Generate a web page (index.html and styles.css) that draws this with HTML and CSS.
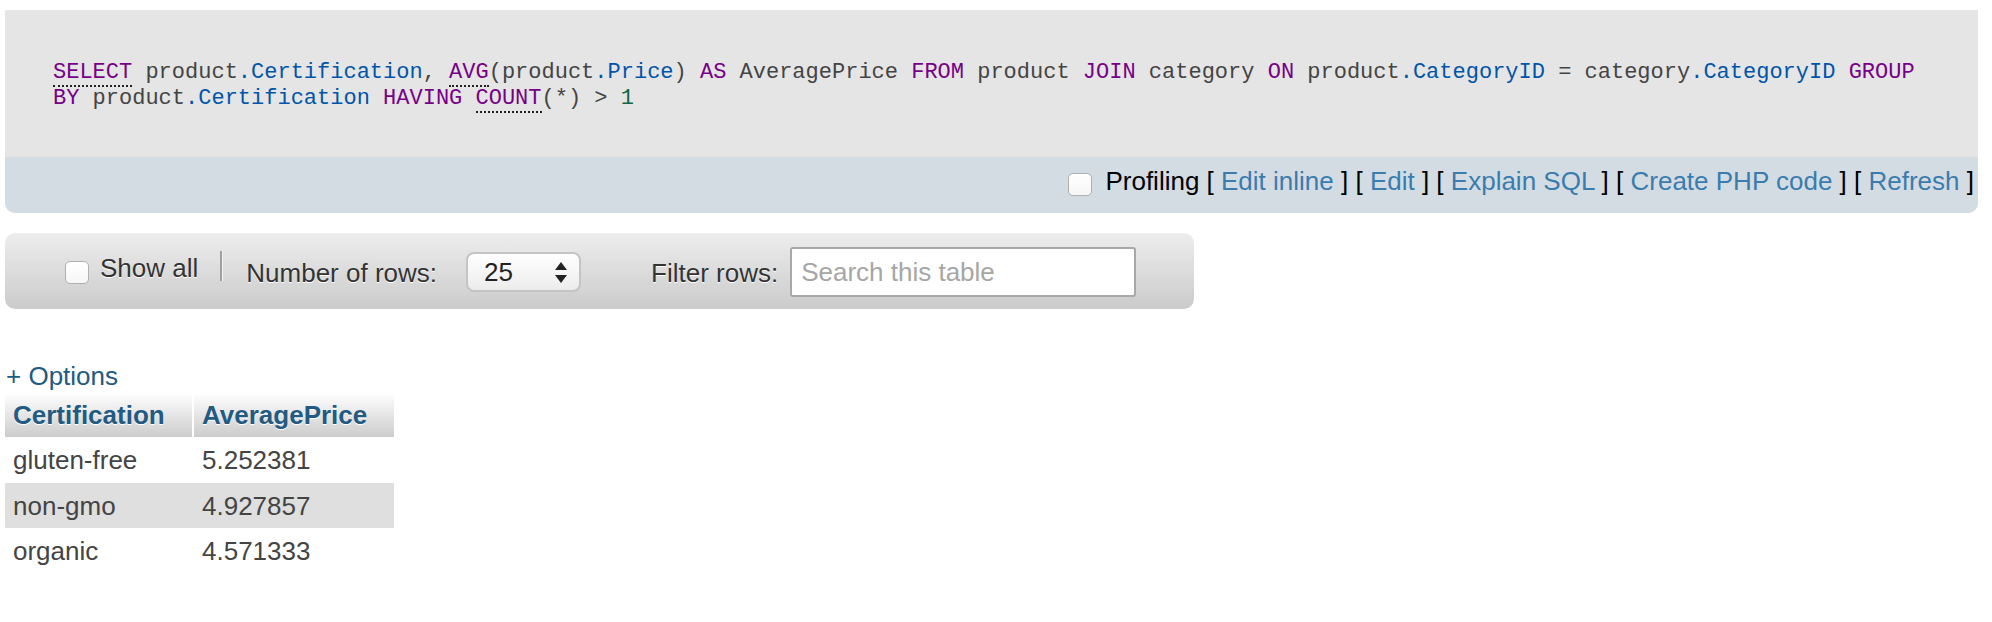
FILE: index.html
```html
<!DOCTYPE html>
<html lang="en">
<head>
<meta charset="utf-8">
<title>SQL result</title>
<link rel="stylesheet" href="styles.css">
</head>
<body>
<div class="page">
  <div class="sqlbox">
    <div class="sqlcode"><span class="kw dot">SELECT</span> product<span class="var">.Certification</span>, <span class="kw dot">AVG</span>(product<span class="var">.Price</span>) <span class="kw">AS</span> AveragePrice <span class="kw">FROM</span> product <span class="kw">JOIN</span> category <span class="kw">ON</span> product<span class="var">.CategoryID</span> = category<span class="var">.CategoryID</span> <span class="kw">GROUP</span> <span class="kw">BY</span> product<span class="var">.Certification</span> <span class="kw">HAVING</span> <span class="kw dot">COUNT</span>(*) &gt; <span class="num">1</span></div>
    <div class="sqlbar">
      <input type="checkbox" class="cb cb-bar">
      <span class="bartext">Profiling [ <a class="barlink">Edit inline</a> ] [ <a class="barlink">Edit</a> ] [ <a class="barlink">Explain SQL</a> ] [ <a class="barlink">Create PHP code</a> ] [ <a class="barlink">Refresh</a> ]</span>
    </div>
  </div>

  <div class="navbar">
    <input type="checkbox" class="cb cb-nav">
    <span class="lbl lbl-show">Show all</span>
    <span class="sep"></span>
    <span class="lbl lbl-rows">Number of rows:</span>
    <span class="select">
      <span class="select-val">25</span>
      <svg class="arrows" width="12" height="22" viewBox="0 0 12 22"><path d="M6 0 L12 8 L0 8 Z" fill="#222"/><path d="M0 13 L12 13 L6 21 Z" fill="#222"/></svg>
    </span>
    <span class="lbl lbl-filter">Filter rows:</span>
    <input type="text" class="filter" placeholder="Search this table">
  </div>

  <a class="options">+ Options</a>

  <table class="results">
    <colgroup><col class="c1"><col class="c2"></colgroup>
    <thead>
      <tr><th class="th1">Certification</th><th>AveragePrice</th></tr>
    </thead>
    <tbody>
      <tr class="odd"><td>gluten-free</td><td>5.252381</td></tr>
      <tr class="even"><td>non-gmo</td><td>4.927857</td></tr>
      <tr class="odd"><td>organic</td><td>4.571333</td></tr>
    </tbody>
  </table>
</div>
</body>
</html>
```

FILE: styles.css
```css
html, body {
  margin: 0;
  padding: 0;
  background: #fff;
}

body {
  font-family: "Liberation Sans", Arial, sans-serif;
  color: #444;
}

.page {
  padding: 10px 14px 20px 5px;
}

/* SQL box */
.sqlbox {
  background: #e5e5e5;
  border-radius: 0 0 10px 10px;
  overflow: hidden;
}

.sqlcode {
  padding: 50px 48px 45px 48px;
  font-family: "Liberation Mono", "Courier New", monospace;
  font-size: 22px;
  line-height: 26px;
  color: #444;
}

.kw { color: #770088; }
.var { color: #0055aa; }
.num { color: #116644; }
.dot { border-bottom: 2px dotted #222; }

.sqlbar {
  background: #d3dce3;
  height: 56px;
  box-sizing: border-box;
  padding: 9px 4px 0 8px;
  display: flex;
  justify-content: flex-end;
  align-items: flex-start;
  font-size: 26px;
  line-height: 30px;
  color: #000;
}

.cb {
  -webkit-appearance: none;
  appearance: none;
  margin: 0;
  width: 24px;
  height: 23px;
  box-sizing: border-box;
  border: 1px solid #b0b0b0;
  border-radius: 5px;
  background: linear-gradient(#fff, #f6f6f6);
  flex: none;
}

.cb-bar {
  margin-top: 7px;
  margin-right: 13px;
}

.barlink {
  color: #3a7cae;
  text-decoration: none;
}

/* navigation toolbar */
.navbar {
  margin-top: 20px;
  width: 1189px;
  height: 76px;
  box-sizing: border-box;
  border-radius: 10px;
  background: linear-gradient(#ededed, #cbcbcb);
  display: flex;
  align-items: flex-start;
  padding-left: 60px;
  font-size: 26px;
  line-height: 30px;
  color: #333;
}

.cb-nav {
  margin-top: 28px;
}

.lbl {
  text-shadow: 0 1px 0 #fff;
  white-space: nowrap;
}

.lbl-show {
  margin-top: 20px;
  margin-left: 11px;
}

.sep {
  margin-top: 18px;
  margin-left: 22px;
  width: 2px;
  height: 30px;
  background: #a0a0a0;
  border-right: 1px solid #f2f2f2;
}

.lbl-rows {
  margin-top: 25px;
  margin-left: 23px;
}

.select {
  margin-top: 19px;
  margin-left: 29px;
  width: 115px;
  height: 40px;
  box-sizing: border-box;
  border: 2px solid #c4c4c4;
  border-radius: 8px;
  background: linear-gradient(#ffffff, #ececec);
  display: flex;
  align-items: center;
  justify-content: space-between;
  padding: 0 12px 0 16px;
  color: #222;
}

.select-val {
  line-height: 30px;
}

.arrows {
  display: block;
  margin-top: 1px;
}

.lbl-filter {
  margin-top: 25px;
  margin-left: 70px;
}

.filter {
  margin-top: 14px;
  margin-left: 12px;
  width: 346px;
  height: 50px;
  box-sizing: border-box;
  border: 2px solid #a8a8a8;
  border-radius: 3px;
  padding: 0 9px;
  font-family: "Liberation Sans", Arial, sans-serif;
  font-size: 26px;
  color: #333;
  background: #fff;
  outline: none;
}

.filter::placeholder {
  color: #a6a6a6;
}

/* options link */
.options {
  display: block;
  margin-top: 52px;
  padding-left: 1px;
  font-size: 26px;
  line-height: 30px;
  color: #235a81;
  text-decoration: none;
}

/* results table */
.results {
  margin-top: 2px;
  border-collapse: separate;
  border-spacing: 0;
  table-layout: fixed;
  width: 389px;
  font-size: 26px;
  line-height: 30px;
}

.c1 { width: 189px; }
.c2 { width: 200px; }

.results th {
  height: 44px;
  box-sizing: border-box;
  padding: 0 8px;
  text-align: left;
  font-weight: bold;
  color: #235a81;
  text-shadow: 0 1px 0 #fff;
  background: linear-gradient(#ffffff, #cccccc);
  white-space: nowrap;
}

.results th.th1 {
  border-right: 2px solid #fff;
}

.results td {
  padding: 8px 8px 7.5px 8px;
  color: #444;
  white-space: nowrap;
}

.results tr.odd td { background: #fff; }
.results tr.even td { background: #dfdfdf; }
```
